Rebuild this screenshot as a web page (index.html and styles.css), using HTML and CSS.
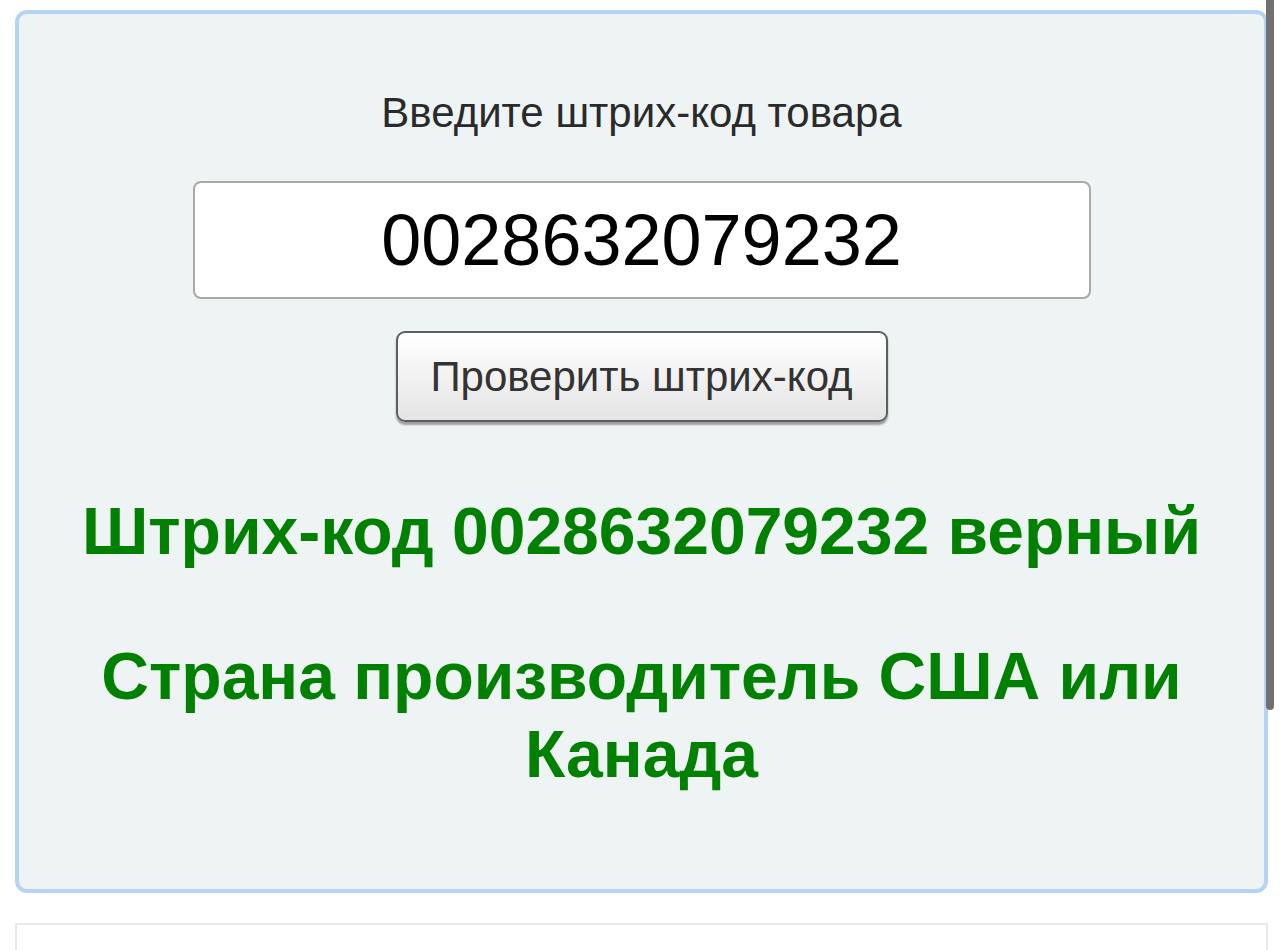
FILE: index.html
```html
<!DOCTYPE html>
<html lang="ru">
<head>
<meta charset="utf-8">
<title>Проверка штрих-кода</title>
<link rel="stylesheet" href="styles.css">
</head>
<body>
<div class="page">
  <section class="checker">
    <label class="label" for="code">Введите штрих-код товара</label>
    <input class="code-input" id="code" type="text" value="0028632079232">
    <button class="check-btn" type="button">Проверить штрих-код</button>
    <p class="result">Штрих-код 0028632079232 верный</p>
    <p class="result country">Страна производитель США или Канада</p>
  </section>
  <section class="next-box"></section>
</div>
<div class="scrollbar"></div>
</body>
</html>
```
FILE: styles.css
```css
html, body {
  margin: 0;
  padding: 0;
  background: #ffffff;
  overflow: hidden;
}
body {
  font-family: "Liberation Sans", Arial, sans-serif;
}
.page {
  padding: 10px 16px 0 15px;
  display: flex;
  flex-direction: column;
  gap: 30px;
}
.checker {
  border: 4px solid #b6d3f6;
  border-radius: 12px;
  background: #eef4f4;
  display: flex;
  flex-direction: column;
  align-items: center;
  padding: 76px 20px 96px;
  height: 883px;
  box-sizing: border-box;
}
.label {
  font-size: 42px;
  color: #2a2a2a;
  line-height: 46px;
}
.code-input {
  margin-top: 45px;
  width: 898px;
  height: 118px;
  box-sizing: border-box;
  border: 2px solid #a9a9a9;
  border-radius: 8px;
  background: #fff;
  font-family: "Liberation Sans", Arial, sans-serif;
  font-size: 72px;
  text-align: center;
  color: #000;
  padding: 0;
  outline: none;
}
.check-btn {
  margin-top: 32px;
  width: 492px;
  height: 91px;
  box-sizing: border-box;
  border: 2px solid #5e5e5e;
  border-radius: 9px;
  background: linear-gradient(#ffffff, #e4e4e4);
  box-shadow: 0 3px 2px rgba(0,0,0,0.35);
  font-family: "Liberation Sans", Arial, sans-serif;
  font-size: 42px;
  color: #333;
  padding: 0;
}
.result {
  margin: 70px 0 0;
  color: #028002;
  font-weight: bold;
  font-size: 66px;
  line-height: 78px;
  text-align: center;
}
.country {
  margin-top: 67px;
  max-width: 1120px;
}
.next-box {
  height: 40px;
  border: 2px solid #e9e9e9;
  border-bottom: none;
  background: #fff;
}
.scrollbar {
  position: absolute;
  top: 0;
  right: 10px;
  width: 8px;
  height: 710px;
  border-radius: 0 0 5px 5px;
  background: #707070;
}
```
